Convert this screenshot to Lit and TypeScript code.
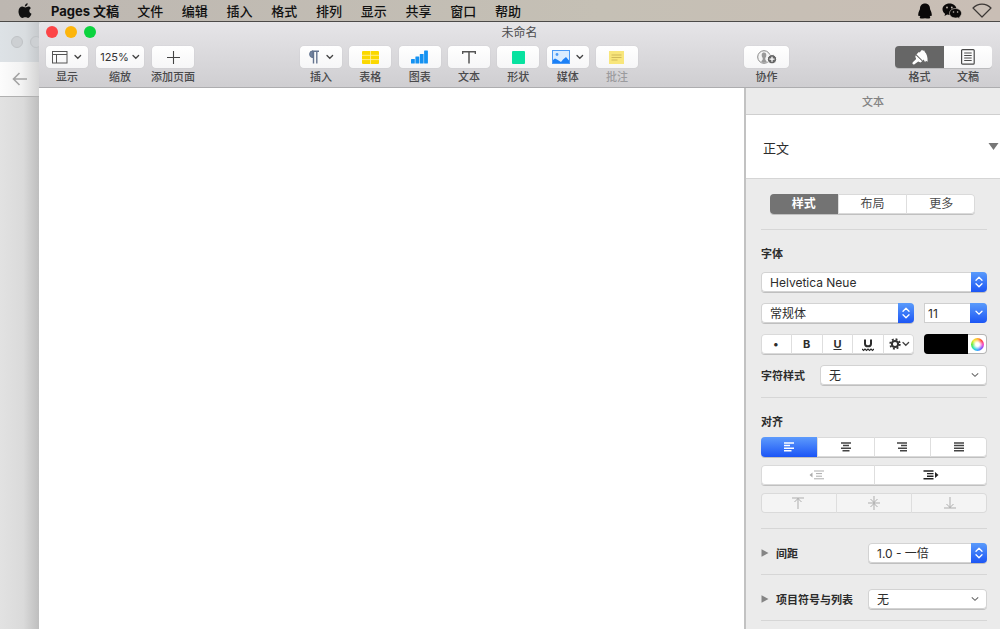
import { LitElement, html, svg, css, TemplateResult } from "lit";
import { customElement, property, state } from "lit/decorators.js";

const chevron = svg`<path d="M1 1.5l2.8 2.8L6.6 1.5" fill="none" stroke="#444" stroke-width="1.3" stroke-linecap="round"/>`;
const chevronIcon = html`<svg width="8" height="6" viewBox="0 0 8 6">${chevron}</svg>`;

const icons: Record<string, TemplateResult> = {
  view: html`<svg width="16" height="13" viewBox="0 0 16 13"><g fill="none" stroke="#555"><rect x=".5" y=".5" width="14.5" height="11.5"/><path d="M.5 3.5h14.5M4.5 3.5v8.5"/></g></svg>`,
  plus: html`<svg width="13" height="13" viewBox="0 0 13 13"><path d="M6.5 0v13M0 6.5h13" stroke="#444" stroke-width="1.1"/></svg>`,
  insert: html`<svg width="12" height="14" viewBox="0 0 12 14"><path d="M5 .8A3.3 3.3 0 0 0 5 7.6z" fill="#7284a0" stroke="#64748f"/><path d="M4.5 1.2h6.5M5.5 1v12.5M8.8 1v12.5" fill="none" stroke="#64748f" stroke-width="1.4"/></svg>`,
  table: html`<svg width="17" height="13" viewBox="0 0 17 13"><rect width="17" height="13" rx="1" fill="#fbd800"/><path d="M0 4.3h17M0 8.6h17M8.5 0v13" stroke="#fff3ac" stroke-width=".8"/></svg>`,
  chart: html`<svg width="17" height="14" viewBox="0 0 17 14"><g fill="#1492f2"><rect y="9" width="3.8" height="4.5" rx=".5"/><rect x="4.4" y="6.5" width="3.8" height="7" rx=".5"/><rect x="8.8" y="4" width="3.8" height="9.5" rx=".5"/><rect x="13.1" y=".5" width="3.8" height="13" rx=".5"/></g></svg>`,
  text: html`<svg width="14" height="13" viewBox="0 0 14 13"><path d="M.6 3V.8h12.8V3M7 .8v11.7" fill="none" stroke="#555" stroke-width="1.5"/></svg>`,
  shape: html`<svg width="13" height="13" viewBox="0 0 13 13"><rect width="13" height="13" rx="1" fill="#08e2a0"/></svg>`,
  media: html`<svg width="18" height="14" viewBox="0 0 18 14"><rect x=".5" y=".5" width="17" height="13" fill="#d9ecff" stroke="#4b9af5"/><path d="M1 13v-3l2-1.500 2 1 4 2.500 2-2.500L14 7l3 3.500V13z" fill="#1b80f7"/><circle cx="5" cy="4.500" r="1.400" fill="#4b9af5"/></svg>`,
  comment: html`<svg width="15" height="13" viewBox="0 0 15 13"><rect width="15" height="13" fill="#f8e67b"/><path d="M2.500 4h10M2.500 6.500h10M2.500 9h6" stroke="#d0b95a"/></svg>`,
  collaborate: html`<svg width="20" height="14" viewBox="0 0 20 14"><circle cx="7" cy="7" r="6.300" fill="#f4f4f4" stroke="#888"/><path d="M7 2.600c1.700 0 2.300 1.100 2.300 2.600S8.600 7.500 8.300 8v1.300c0 1 1.400 1.200 1.400 2.700-1.500 1-4 1-5.400 0 0-1.500 1.400-1.700 1.400-2.700V8c-.3-.5-1-1.300-1-2.800S5.300 2.600 7 2.600z" fill="#999"/><circle cx="15" cy="9.200" r="4.700" fill="#666" stroke="#fff"/><path d="M15 6.700v5M12.500 9.200h5" stroke="#fff" stroke-width="1.300"/></svg>`,
  format: html`<svg width="18" height="16" viewBox="0 0 18 16"><path d="M5.400 5.600L7.800 3l.8.5L11 .8l1 1 1.300-.4.5 1.700c1.900 1.800 3 4.700 2.800 9.600l-1.700-.9-.8 1.500-1.500-2.800-1 1.200z" fill="#fff"/><path d="M4.800 6.200l6.300 6.100-1.600 1.100-2.300-.9-3.700 2.800c-1.500.7-2.700-.8-1.700-2l3.400-3.200-.9-2.300z" fill="#fff"/><path d="M5.200 5.700l6.400 6.200" stroke="#666" stroke-width=".6"/></svg>`,
  document: html`<svg width="14" height="16" viewBox="0 0 14 16"><rect x=".6" y=".6" width="12.6" height="14.6" rx="1" fill="none" stroke="#4b4b4b" stroke-width="1.2"/><path d="M3.2 4h7.500M3.2 6.500h7.500M3.2 9h7.500M3.2 11.500h7.500" stroke="#4b4b4b"/></svg>`,
};

const lines = (d: string, color: string) =>
  html`<svg width="12" height="10" viewBox="0 0 12 10"><path d=${d} stroke=${color} stroke-width="1.5" fill="none"/></svg>`;

const alignIcons = [
  { label: "左对齐", d: "M1 1h10M1 3.600h6M1 6.200h10M1 8.800h7.500" },
  { label: "居中", d: "M1 1h10M3 3.600h6M1 6.200h10M2.500 8.800h7" },
  { label: "右对齐", d: "M1 1h10M5 3.600h6M2 6.200h9M4 8.800h7" },
  { label: "两端对齐", d: "M1 1h10M1 3.600h10M1 6.200h10M1 8.800h10" },
];

@customElement("tool-button")
export class ToolButton extends LitElement {
  @property() icon = "";
  @property() caption = "";
  @property() text = "";
  @property({ type: Boolean }) menu = false;
  @property({ type: Boolean }) disabled = false;

  static styles = css`
    :host { display: block; width: 42px; }
    :host([wide]) { width: 48px; }
    :host([medium]) { width: 45px; }
    .tool { width: 100%; display: flex; flex-direction: column; align-items: center; gap: 1px; padding: 0; border: 0; background: none; font: inherit; color: #4a4a4c; }
    .face { align-self: stretch; height: 22px; display: flex; align-items: center; justify-content: center; gap: 6px; border-radius: 4px; background: linear-gradient(#fff, #f6f6f7); box-shadow: 0 0 1px #b0b0b2; }
    .value { font-size: 11px; color: #333; margin-right: -3px; }
    .caption { font-size: 11px; line-height: 16px; white-space: nowrap; font-weight: 500; }
    .tool:disabled { color: #9b9b9e; }
  `;

  render() {
    return html`<button class="tool" ?disabled=${this.disabled}>
      <span class="face">
        ${this.text ? html`<span class="value">${this.text}</span>` : icons[this.icon]}
        ${this.menu ? chevronIcon : ""}
      </span>
      <span class="caption">${this.caption}</span>
    </button>`;
  }
}

@customElement("pop-select")
export class PopSelect extends LitElement {
  @property() label = "";
  @property() value = "";
  @property({ type: Boolean }) plain = false;

  static styles = css`
    :host { display: block; min-width: 0; }
    .box { display: grid; grid-template-columns: 1fr 16px; height: 20px; border-radius: 4px; background: #fff; box-shadow: 0 0 0 1px #d3d3d3 inset, 0 1px 0 #bfbfbf; overflow: hidden; }
    select { grid-area: 1 / 1 / 2 / 3; min-width: 0; appearance: none; border: 0; margin: 0; padding: 0 18px 0 9px; background: none; font: inherit; font-size: 12px; color: #2c2c2c; }
    .cap { grid-area: 1 / 2 / 2 / 3; pointer-events: none; display: flex; align-items: center; justify-content: center; background: linear-gradient(#5a9bfb, #1c56f5); }
    .plain .cap { background: none; margin-right: 8px; }
  `;

  render() {
    return html`<div class="box ${this.plain ? "plain" : ""}">
      <select aria-label=${this.label}><option>${this.value}</option></select>
      <span class="cap">${this.plain
        ? html`<svg width="8" height="6" viewBox="0 0 8 6"><path d="M.8 1.300L4 4.300l3.200-3" fill="none" stroke="#666" stroke-width="1.100"/></svg>`
        : html`<svg width="8" height="12" viewBox="0 0 8 12"><path d="M1 4.200l3-3 3 3M1 7.800l3 3 3-3" fill="none" stroke="#fff" stroke-width="1.300" stroke-linecap="round" stroke-linejoin="round"/></svg>`}</span>
    </div>`;
  }
}

@customElement("format-panel")
export class FormatPanel extends LitElement {
  @state() tab = 0;
  @state() align = 0;

  static styles = css`
    :host { display: block; overflow: hidden; background: #ebebeb; border-left: 2px solid #c2c2c2; color: #2c2c2c; }
    button { font: inherit; color: inherit; margin: 0; padding: 0; border: 0; background: none; }
    .head { height: 26px; margin: 0; display: flex; align-items: center; justify-content: center; font-size: 11px; font-weight: 500; color: #838383; border-bottom: 1px solid #cfcfcf; }
    .paragraph { width: 100%; height: 64px; display: flex; align-items: center; justify-content: space-between; padding: 2px 1px 0 17px; background: #fff; border-bottom: 1px solid #d5d5d5; font-size: 13px; }
    .body { padding: 15px 13px 0 15px; }
    .seg { display: flex; height: 20px; border-radius: 4px; background: #fff; box-shadow: 0 0 0 1px #dadada inset, 0 1px 0 #c0c0c0; overflow: hidden; }
    .seg button { flex: 1; display: flex; align-items: center; justify-content: center; gap: 1px; border-left: 1px solid #dedede; }
    .seg button:first-child { border-left: 0; }
    .tabs { margin: 0 12px 15px 9px; font-size: 12px; line-height: 16px; color: #4c4c4c; }
    .tabs .on { background: #737373; color: #fff; font-weight: 700; }
    .align .on { background: linear-gradient(#5d9bfc, #1b55f6); }
    .dim { background: #f4f4f4; box-shadow: 0 0 0 1px #dadada inset; }
    .section { border-top: 1px solid #d6d6d6; padding: 15px 0 12px; }
    .section.close { padding-bottom: 15px; }
    .title { margin: 0 0 9px; font-size: 11px; line-height: 18px; font-weight: 700; }
    .close .title { margin-bottom: 6px; }
    .rows { display: grid; gap: 11px; }
    .close .rows { gap: 8px; }
    .pair { display: grid; grid-template-columns: 1fr 63px; gap: 10px; }
    .styles { font-size: 11px; font-weight: 700; }
    .under { text-decoration: underline; }
    .size { display: grid; grid-template-columns: 1fr 17px; height: 20px; border-radius: 0 4px 4px 0; overflow: hidden; background: #fff; box-shadow: 0 0 0 1px #cfcfcf inset; }
    .size input { min-width: 0; border: 0; padding: 0 4px; background: none; font: inherit; font-size: 12px; color: #2c2c2c; }
    .size button { display: flex; align-items: center; justify-content: center; background: linear-gradient(#5a9bfb, #1c56f5); }
    .well { display: grid; grid-template-columns: 1fr 19px; height: 20px; border-radius: 4px; overflow: hidden; background: #fff; box-shadow: 0 0 0 1px #b5b5b5 inset; }
    .well input { width: 100%; height: 100%; padding: 0; border: 0; appearance: none; background: #000; }
    .well input::-webkit-color-swatch-wrapper { padding: 0; }
    .well input::-webkit-color-swatch { border: 0; }
    .well button { display: flex; align-items: center; justify-content: center; }
    .wheel { width: 13px; height: 13px; border-radius: 50%; background: radial-gradient(#fff 20%, #fff0 60%), conic-gradient(#ffb52b, #ff4538, #f544c4, #7a55ff, #35a8ff, #28e2c4, #61e835, #f1ea33, #ffb52b); }
    .named { display: flex; align-items: center; font-size: 11px; font-weight: 700; }
    .named pop-select { flex: 1; margin-left: 15px; font-weight: 400; }
    .fold { padding: 14px 0 11px; display: grid; grid-template-columns: 1fr 119px; align-items: center; border-top: 1px solid #d6d6d6; }
    .fold button { display: flex; align-items: center; gap: 7px; font-size: 11px; font-weight: 700; white-space: nowrap; }
    .last { border-top: 1px solid #d6d6d6; }
  `;

  render() {
    const gray = "#adadad";
    const foldMark = html`<svg width="8" height="8" viewBox="0 0 8 8"><path d="M.5 .3L7.500 4 .5 7.700z" fill="#858585"/></svg>`;
    return html`
      <h2 class="head">文本</h2>
      <button class="paragraph">正文<svg width="11" height="11" viewBox="0 0 11 11"><path d="M.5 1h10L5.500 8z" fill="#777"/></svg></button>
      <div class="body">
        <div class="seg tabs">
          ${["样式", "布局", "更多"].map((t, i) => html`<button class=${i === this.tab ? "on" : ""} @click=${() => (this.tab = i)}>${t}</button>`)}
        </div>
        <section class="section">
          <h3 class="title">字体</h3>
          <div class="rows">
            <pop-select label="字体" value="Helvetica Neue"></pop-select>
            <div class="pair">
              <pop-select label="字重" value="常规体"></pop-select>
              <div class="size">
                <input aria-label="字号" value="11" />
                <button aria-label="选择字号"><svg width="8" height="6" viewBox="0 0 8 6"><path d="M1 1.200l3 3 3-3" fill="none" stroke="#fff" stroke-width="1.300" stroke-linecap="round"/></svg></button>
              </div>
            </div>
            <div class="pair">
              <div class="seg styles">
                <button aria-label="字符">•</button>
                <button aria-label="粗体">B</button>
                <button aria-label="下划线"><span class="under">U</span></button>
                <button aria-label="拼写"><svg width="12" height="15" viewBox="0 0 12 15"><path d="M3 2.500v4.200c0 3.500 6 3.500 6 0V2.500" fill="none" stroke="#2c2c2c" stroke-width="2"/><path d="M0 12l1.500 1.500L3 12l1.500 1.500L6 12l1.500 1.500L9 12l1.500 1.500L12 12" fill="none" stroke="#2c2c2c" stroke-width="1.200"/></svg></button>
                <button aria-label="高级选项"><svg width="12" height="12" viewBox="0 0 12 12"><circle cx="6" cy="6" r="3.100" fill="none" stroke="#333" stroke-width="2"/><circle cx="6" cy="6" r="4.800" fill="none" stroke="#333" stroke-width="1.800" stroke-dasharray="1.900 1.870"/></svg>${chevronIcon}</button>
              </div>
              <div class="well">
                <input type="color" aria-label="文本颜色" value="#000000" />
                <button aria-label="色轮"><span class="wheel"></span></button>
              </div>
            </div>
            <div class="named">字符样式<pop-select plain label="字符样式" value="无"></pop-select></div>
          </div>
        </section>
        <section class="section close">
          <h3 class="title">对齐</h3>
          <div class="rows">
            <div class="seg align">
              ${alignIcons.map((a, i) => html`<button aria-label=${a.label} class=${i === this.align ? "on" : ""} @click=${() => (this.align = i)}>${lines(a.d, i === this.align ? "#fff" : "#444")}</button>`)}
            </div>
            <div class="seg">
              <button aria-label="减少缩进" disabled><svg width="16" height="10" viewBox="0 0 16 10"><path d="M3.500 2.500v5L.5 5z" fill=${gray}/><path d="M5 1h10M7 3.600h6M7 6.200h6M5 8.800h10" stroke=${gray}/></svg></button>
              <button aria-label="增加缩进"><svg width="16" height="10" viewBox="0 0 16 10"><path d="M12 2v6l3.500-3z" fill="#222"/><path d="M.5 1h10M4 3.600h6.500M4 6.200h6.500M.5 8.800h10" stroke="#222" stroke-width="1.400"/></svg></button>
            </div>
            <div class="seg dim">
              <button aria-label="顶部对齐" disabled><svg width="14" height="12" viewBox="0 0 14 12"><path d="M1 1h12M7 1v11M3.500 5L7 1.500 10.500 5" fill="none" stroke=${gray}/></svg></button>
              <button aria-label="垂直居中" disabled><svg width="14" height="14" viewBox="0 0 14 14"><path d="M1 7h12M7 0v14M3.500 3L7 6.500 10.500 3M3.500 11L7 7.500l3.500 3.500" fill="none" stroke=${gray}/></svg></button>
              <button aria-label="底部对齐" disabled><svg width="14" height="12" viewBox="0 0 14 12"><path d="M1 11h12M7 0v11M3.500 7L7 10.500 10.500 7" fill="none" stroke=${gray}/></svg></button>
            </div>
          </div>
        </section>
        <div class="fold"><button>${foldMark}间距</button><pop-select label="间距" value="1.0 - 一倍"></pop-select></div>
        <div class="fold"><button>${foldMark}项目符号与列表</button><pop-select plain label="项目符号与列表" value="无"></pop-select></div>
        <div class="last"></div>
      </div>
    `;
  }
}

@customElement("app-root")
export class AppRoot extends LitElement {
  static styles = css`
    :host { display: grid; grid-template-rows: 22px 1fr; height: 100vh; overflow: hidden; background: #4c4a48; font-family: Inter, "Noto Sans CJK SC", sans-serif; color: #111; }
    button { font: inherit; color: inherit; margin: 0; padding: 0; border: 0; background: none; white-space: nowrap; }
    .menubar { box-sizing: border-box; display: flex; align-items: center; padding: 0 8px 0 18px; font-size: 13px; line-height: 16px; font-weight: 500; background: linear-gradient(90deg, #bdb7b1, #c5c0b5 60%, #c9beb5); border-bottom: 1px solid #4c4a48; }
    .app { font-weight: 700; margin: 0 18px 0 19px; }
    .menus { width: 384px; display: flex; justify-content: space-between; }
    .status { margin-left: auto; display: flex; align-items: center; gap: 10px; }
    .desk { display: grid; grid-template-columns: 39px 1fr; min-height: 0; background: #dcdfe2; }
    .behind { display: grid; grid-template-rows: 40px 35px 1fr; overflow: hidden; background: linear-gradient(90deg, #e2e2e2, #dadada 60%, #bebebe); }
    .behind-title { display: flex; align-items: center; gap: 7px; padding-left: 11px; background: linear-gradient(90deg, #dde2e6, #d9dde0 60%, #c2c5c8); }
    .ghost { box-sizing: border-box; flex: none; width: 12px; height: 12px; border-radius: 50%; background: #cdd0d3; border: 1px solid #c0c3c6; }
    .behind-bar { display: flex; align-items: center; padding-left: 12px; background: linear-gradient(90deg, #fcfcfc, #f3f3f3 50%, #d0d0d0); border-bottom: 1px solid #b0b0b0; }
    .window { display: grid; grid-template-rows: 66px 1fr; min-width: 0; min-height: 0; border-top-left-radius: 5px; overflow: hidden; background: #fff; }
    .chrome { box-sizing: border-box; background: linear-gradient(#e6e5e8, #cfced1); border-bottom: 1px solid #adadaf; }
    .titlebar { height: 24px; display: grid; grid-template-columns: 1fr auto 1fr; align-items: start; padding: 0 7px; }
    .lights { display: flex; gap: 7px; padding-top: 4px; }
    .light { width: 12px; height: 12px; border-radius: 50%; }
    .red { background: #fc4547; }
    .amber { background: #fdb50b; }
    .green { background: #0bd33e; }
    .title { margin: 0; font-size: 12px; line-height: 21px; font-weight: 400; color: #4b4b4d; }
    .toolbar { display: flex; justify-content: space-between; padding: 0 8px 0 7px; }
    .group { display: flex; gap: 8px; }
    .main-tools { width: 338px; gap: 0; justify-content: space-between; }
    .switch { display: grid; grid-template-columns: 49px 48px; }
    .side { display: flex; flex-direction: column; align-items: stretch; gap: 1px; color: #4a4a4c; }
    .side-face { height: 22px; display: flex; align-items: center; justify-content: center; border-radius: 0 4px 4px 0; background: linear-gradient(#fff, #f6f6f7); box-shadow: 0 1px 0 #bbbbbd; }
    .on .side-face { background: #666; border-radius: 4px 0 0 4px; }
    .caption { font-size: 11px; line-height: 16px; font-weight: 500; }
    .work { display: grid; grid-template-columns: 1fr 256px; min-height: 0; }
    .page { background: #fff; }
  `;

  render() {
    return html`
      <header class="menubar">
        <svg width="14" height="16" viewBox="0 0 14 16" aria-label="Apple"><path d="M9.700.2c.1 1.600-1.300 3.300-2.900 3.300C6.600 1.900 8.200.4 9.700.2zM12.900 5.200c-2.300 1.400-1.900 4.600.6 5.500-.6 1.900-2 4.200-3.400 4.300-1.100 0-1.400-.7-2.800-.7s-1.800.7-2.800.7C2.500 15 .5 11.500.5 8.500c0-3.200 1.900-4.900 3.900-4.900 1.200 0 2 .8 3 .8s1.700-.8 3.200-.8c.9 0 1.800.6 2.300 1.600z" fill="#111"/></svg>
        <button class="app">Pages 文稿</button>
        <nav class="menus">
          ${["文件", "编辑", "插入", "格式", "排列", "显示", "共享", "窗口", "帮助"].map((m) => html`<button>${m}</button>`)}
        </nav>
        <div class="status">
          <svg width="14" height="16" viewBox="0 0 14 16"><path d="M7 .5c3.200 0 5 2.200 5 5 0 1.500 1.800 3.400 1.800 6.300 0 1.200-.7 1.600-1.400 1-.1.400-.4.700-.7 1 .9.500.8 1.700-.7 1.700-1.500 0-2.600 0-4-.2-1.400.2-2.500.2-4 .2s-1.600-1.200-.7-1.700c-.3-.3-.6-.6-.7-1-.7.6-1.400.2-1.400-1C.2 8.900 2 7 2 5.500c0-2.800 1.800-5 5-5z" fill="#0b0909"/></svg>
          <svg width="20" height="16" viewBox="0 0 20 16"><path d="M7.500.5c4 0 7 2.500 7 5.700s-3 5.700-7 5.700c-.8 0-1.600-.1-2.300-.3L2.500 13l.6-2.300C1.500 9.700.5 8 .5 6.200.5 3 3.500.5 7.500.5z" fill="#0b0909"/><path d="M13.500 5.500c3.400 0 6 2.100 6 4.800 0 1.500-.8 2.800-2 3.700l.4 1.700-2-1c-.8.2-1.600.3-2.400.3-3.400 0-6-2-6-4.700s2.600-4.800 6-4.800z" fill="#0b0909" stroke="#c8beb5" stroke-width=".7"/><g fill="#c8beb5"><circle cx="5" cy="4.500" r=".9"/><circle cx="9.800" cy="4.500" r=".9"/><circle cx="11.500" cy="9" r=".8"/><circle cx="15.600" cy="9" r=".8"/></g></svg>
          <svg width="20" height="15" viewBox="0 0 20 15"><path d="M1 5C6-.3 14-.3 19 5l-9 9z" fill="none" stroke="#3c3836" stroke-width="1.200" stroke-linejoin="round"/></svg>
        </div>
      </header>
      <div class="desk">
        <aside class="behind">
          <div class="behind-title"><span class="ghost"></span><span class="ghost"></span></div>
          <div class="behind-bar"><svg width="16" height="14" viewBox="0 0 16 14"><path d="M15 7H1.500M7.500 1l-6 6 6 6" fill="none" stroke="#a3a3a3" stroke-width="1.600"/></svg></div>
        </aside>
        <div class="window">
          <header class="chrome">
            <div class="titlebar">
              <div class="lights">
                <button class="light red" aria-label="关闭"></button>
                <button class="light amber" aria-label="最小化"></button>
                <button class="light green" aria-label="全屏"></button>
              </div>
              <h1 class="title">未命名</h1>
            </div>
            <div class="toolbar">
              <div class="group">
                <tool-button icon="view" caption="显示" menu></tool-button>
                <tool-button wide text="125%" caption="缩放" menu></tool-button>
                <tool-button icon="plus" caption="添加页面"></tool-button>
              </div>
              <div class="group main-tools">
                <tool-button icon="insert" caption="插入" menu></tool-button>
                <tool-button icon="table" caption="表格"></tool-button>
                <tool-button icon="chart" caption="图表"></tool-button>
                <tool-button icon="text" caption="文本"></tool-button>
                <tool-button icon="shape" caption="形状"></tool-button>
                <tool-button icon="media" caption="媒体" menu></tool-button>
                <tool-button icon="comment" caption="批注" disabled></tool-button>
              </div>
              <tool-button medium icon="collaborate" caption="协作"></tool-button>
              <div class="switch">
                <button class="side on"><span class="side-face">${icons.format}</span><span class="caption">格式</span></button>
                <button class="side"><span class="side-face">${icons.document}</span><span class="caption">文稿</span></button>
              </div>
            </div>
          </header>
          <div class="work">
            <main class="page"></main>
            <format-panel></format-panel>
          </div>
        </div>
      </div>
    `;
  }
}
